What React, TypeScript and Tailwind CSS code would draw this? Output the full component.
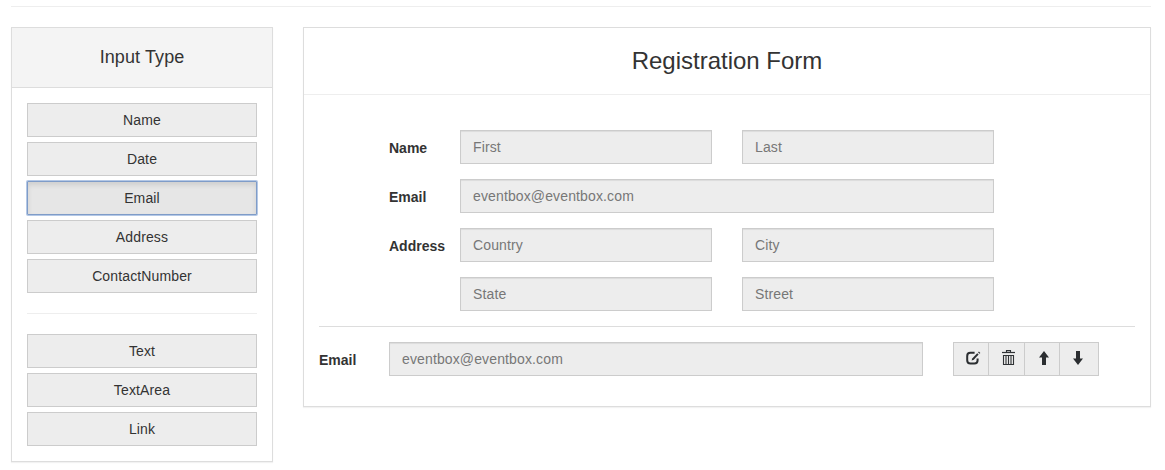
import React from "react";

const CONTACT_TYPES = ["Name", "Date", "Email", "Address", "ContactNumber"];
const BASIC_TYPES = ["Text", "TextArea", "Link"];

function TypeButton({ label, active }: { label: string; active?: boolean }) {
  const state = active
    ? "border-[#7f9cc8] rounded-[1px] bg-[#e6e6e6] shadow-[inset_0_3px_5px_rgba(0,0,0,0.1),0_0_0_1px_#b4c8e6]"
    : "border-[#ccc] bg-[#ededed]";
  return (
    <button type="button" className={"block h-[34px] w-full border text-center text-[14px] leading-[20px] tracking-[0.13px] text-[#333] " + state}>
      {label}
    </button>
  );
}

function Field({ placeholder, className = "w-[252px]" }: { placeholder: string; className?: string }) {
  return (
    <input
      readOnly
      placeholder={placeholder}
      className={
        "block h-[34px] shrink-0 border border-[#ccc] bg-[#ededed] px-3 pb-[1px] text-[14px] tracking-[0.13px] text-[#555] placeholder-[#777] shadow-[inset_0_1px_1px_rgba(0,0,0,0.075)] outline-none " +
        className
      }
    />
  );
}

function Row({ label, children }: { label?: string; children: React.ReactNode }) {
  return (
    <div className="flex">
      <label className="w-[71px] shrink-0 pt-[8px] text-[14px] leading-[20px] font-bold text-[#333]">{label}</label>
      <div className="flex gap-[30px]">{children}</div>
    </div>
  );
}

function EditIcon() {
  return (
    <svg width="15" height="14" viewBox="0 0 15 14" fill="none" stroke="#2b2e31">
      <path d="M8.6 1.8H4.4Q1.2 1.8 1.2 5V9.2Q1.2 12.4 4.4 12.4H8.4Q11.6 12.4 11.6 9.2V7.6" strokeWidth="2" />
      <path d="M5.6 9.6L6.2 7.4L11.2 2.2L12.6 3.6L7.8 8.8Z" fill="#2b2e31" stroke="none" />
      <path d="M12.1 1.4L12.9 0.6L14.3 2L13.5 2.8Z" fill="#2b2e31" stroke="none" />
    </svg>
  );
}

function TrashIcon() {
  return (
    <svg width="13" height="16" viewBox="0 0 13 16" fill="none" stroke="#303336">
      <path d="M4.5 2.5V0.6H8.5V2.5" strokeWidth="1.1" />
      <path d="M0 2.5H13" strokeWidth="1.2" />
      <path d="M1 5.5H12M1 14.5H12" strokeWidth="1" />
      <path d="M1.5 5V15M4 5V15M6.5 5V15M9 5V15M11.5 5V15" strokeWidth="1.1" />
    </svg>
  );
}

function ArrowIcon({ down }: { down?: boolean }) {
  return (
    <svg width="10" height="14" viewBox="0 0 10 14" fill="#2b2e31" className={down ? "rotate-180" : ""}>
      <path d="M5 0L10 6.5H7V14H3V6.5H0Z" />
    </svg>
  );
}

const TOOL = "flex h-[34px] items-start border border-[#ccc] bg-[#ededed] ";

export default function App() {
  return (
    <div className="h-[470px] w-[1165px] overflow-hidden bg-white pt-[6px] pl-[11px] font-['Liberation_Sans',Arial,sans-serif] text-[#333]">
      <hr className="w-[1140px] border-t border-[#eee]" />
      <div className="mt-[20px] flex items-start gap-[30px]">
        <aside className="w-[262px] border border-[#ddd] shadow-[0_1px_1px_rgba(0,0,0,0.05)]">
          <div className="h-[60px] border-b border-[#ddd] bg-[#f4f4f4] pt-[19px] text-center text-[18px] leading-[20px] tracking-[0.1px]">Input Type</div>
          <div className="p-[15px]">
            <div className="flex flex-col gap-[5px]">
              {CONTACT_TYPES.map((t) => (
                <TypeButton key={t} label={t} active={t === "Email"} />
              ))}
            </div>
            <hr className="my-[20px] border-t border-[#eee]" />
            <div className="flex flex-col gap-[5px]">
              {BASIC_TYPES.map((t) => (
                <TypeButton key={t} label={t} />
              ))}
            </div>
          </div>
        </aside>

        <main className="h-[380px] w-[848px] border border-[#ddd] shadow-[0_1px_1px_rgba(0,0,0,0.05)]">
          <h3 className="h-[67px] border-b border-[#eee] pt-[20px] text-center text-[24px] leading-[26px]">Registration Form</h3>
          <div className="px-[15px] pt-[35px]">
            <div className="flex flex-col gap-[15px] pl-[70px]">
              <Row label="Name">
                <Field placeholder="First" />
                <Field placeholder="Last" />
              </Row>
              <Row label="Email">
                <Field placeholder="eventbox@eventbox.com" className="w-[534px]" />
              </Row>
              <Row label="Address">
                <Field placeholder="Country" />
                <Field placeholder="City" />
              </Row>
              <Row>
                <Field placeholder="State" />
                <Field placeholder="Street" />
              </Row>
            </div>
            <hr className="my-[15px] border-t border-[#ddd]" />
            <div className="flex">
              <label className="w-[70px] shrink-0 pt-[8px] text-[14px] leading-[20px] font-bold">Email</label>
              <Field placeholder="eventbox@eventbox.com" className="w-[534px]" />
              <div className="ml-[30px] flex">
                <button type="button" aria-label="Edit" className={TOOL + "w-[36px] pt-[8px] pl-[12px]"}><EditIcon /></button>
                <button type="button" aria-label="Delete" className={TOOL + "-ml-px w-[37px] pt-[7px] pl-[13px]"}><TrashIcon /></button>
                <button type="button" aria-label="Move up" className={TOOL + "-ml-px w-[36px] pt-[8px] pl-[14px]"}><ArrowIcon /></button>
                <button type="button" aria-label="Move down" className={TOOL + "-ml-px w-[40px] pt-[8px] pl-[13px]"}><ArrowIcon down /></button>
              </div>
            </div>
          </div>
        </main>
      </div>
    </div>
  );
}
